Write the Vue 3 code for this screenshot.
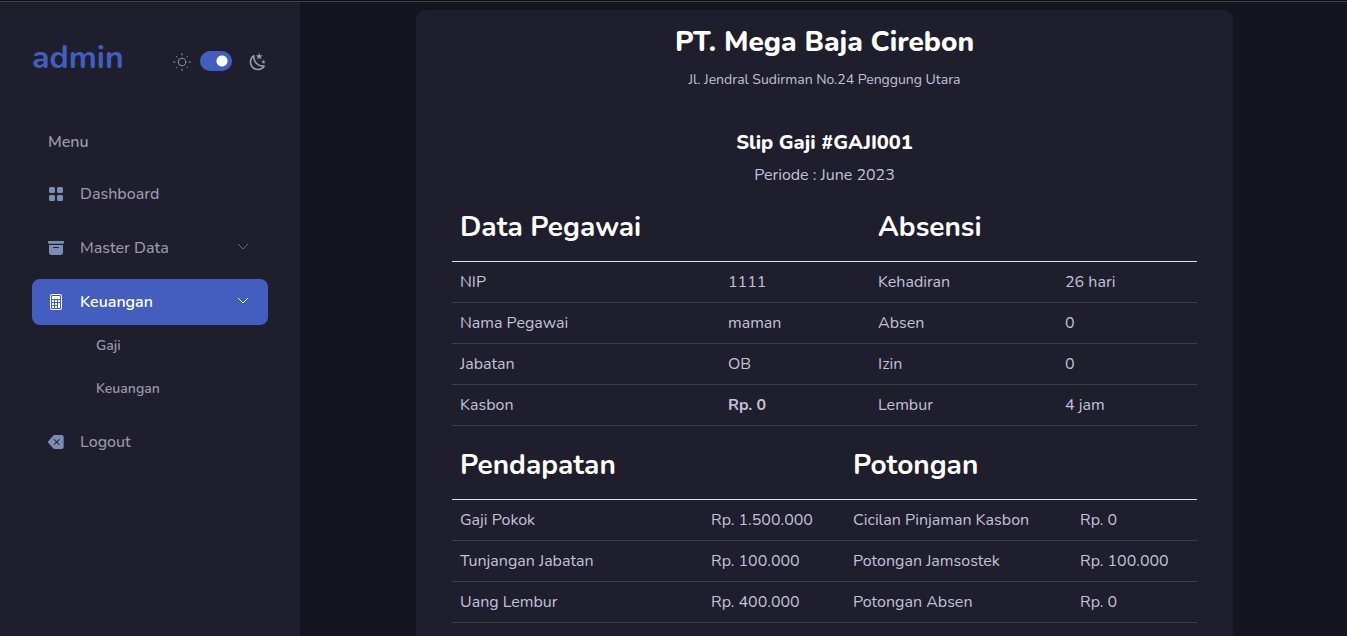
<script setup>
import { ref } from 'vue'

const dark = ref(true)

const employee = [
  ['NIP', '1111', 'Kehadiran', '26 hari'],
  ['Nama Pegawai', 'maman', 'Absen', '0'],
  ['Jabatan', 'OB', 'Izin', '0'],
  ['Kasbon', 'Rp. 0', 'Lembur', '4 jam'],
]

const salary = [
  ['Gaji Pokok', 'Rp. 1.500.000', 'Cicilan Pinjaman Kasbon', 'Rp. 0'],
  ['Tunjangan Jabatan', 'Rp. 100.000', 'Potongan Jamsostek', 'Rp. 100.000'],
  ['Uang Lembur', 'Rp. 400.000', 'Potongan Absen', 'Rp. 0'],
]
</script>

<template>
  <div class="layout">
    <aside class="sidebar">
      <header class="brand-row">
        <a class="brand" href="#">admin</a>
        <div class="theme">
          <svg class="sun" viewBox="0 0 21 21" width="20" height="20" aria-hidden="true">
            <g fill="none" stroke="currentColor" stroke-linecap="round" stroke-linejoin="round">
              <circle cx="10.5" cy="10.5" r="4" />
              <path d="M10.5 1.5v1.6M10.5 17.9v1.6M1.5 10.5h1.6M17.9 10.5h1.6M4.6 4.6l.6.6M15.8 15.8l.6.6M4.6 16.4l.6-.6M15.8 5.2l.6-.6" />
            </g>
          </svg>
          <input v-model="dark" class="switch" type="checkbox" role="switch" aria-label="Dark mode" />
          <svg class="moon" viewBox="0 0 24 24" width="20" height="20" aria-hidden="true">
            <path fill="currentColor" d="m17.75 4.09l-2.53 1.94l.91 3.06l-2.63-1.81l-2.63 1.81l.91-3.06l-2.53-1.94L12.44 4l1.06-3l1.06 3l3.19.09m3.5 6.91l-1.64 1.25l.59 1.98l-1.7-1.17l-1.7 1.17l.59-1.98L15.75 11l2.06-.05L18.5 9l.69 1.95l2.06.05m-2.28 4.95c.83-.08 1.72 1.1 1.19 1.85c-.32.45-.66.87-1.08 1.27C15.17 23 8.84 23 4.94 19.07c-3.91-3.9-3.91-10.24 0-14.14c.4-.4.82-.76 1.27-1.08c.75-.53 1.93.36 1.85 1.19c-.27 2.86.69 5.83 2.89 8.02a9.96 9.96 0 0 0 8.02 2.89m-1.64 2.02a12.08 12.08 0 0 1-7.8-3.47c-2.17-2.19-3.33-5-3.49-7.82c-2.81 3.14-2.7 7.96.31 10.98c3.02 3.01 7.84 3.12 10.98.31Z" />
          </svg>
        </div>
      </header>

      <nav class="nav">
        <h2 class="nav-title">Menu</h2>
        <ul class="menu">
          <li>
            <a class="link" href="#">
              <svg class="icon" viewBox="0 0 16 16" width="16" height="16" aria-hidden="true">
                <path fill="currentColor" d="M1 2.500A1.500 1.500 0 0 1 2.500 1h3A1.500 1.500 0 0 1 7 2.500v3A1.500 1.500 0 0 1 5.500 7h-3A1.500 1.500 0 0 1 1 5.500zm8 0A1.500 1.500 0 0 1 10.500 1h3A1.500 1.500 0 0 1 15 2.500v3A1.500 1.500 0 0 1 13.500 7h-3A1.500 1.500 0 0 1 9 5.500zm-8 8A1.500 1.500 0 0 1 2.500 9h3A1.500 1.500 0 0 1 7 10.500v3A1.500 1.500 0 0 1 5.500 15h-3A1.500 1.500 0 0 1 1 13.500zm8 0A1.500 1.500 0 0 1 10.500 9h3a1.500 1.500 0 0 1 1.500 1.500v3a1.500 1.500 0 0 1-1.500 1.500h-3A1.500 1.500 0 0 1 9 13.500z" />
              </svg>
              <span>Dashboard</span>
            </a>
          </li>
          <li>
            <a class="link" href="#">
              <svg class="icon" viewBox="0 0 16 16" width="16" height="16" aria-hidden="true">
                <path fill="currentColor" d="M12.643 15C13.979 15 15 13.845 15 12.500V5H1v7.500C1 13.845 2.021 15 3.357 15zM5.500 7h5a.5.5 0 0 1 0 1h-5a.5.5 0 0 1 0-1M.8 1a.8.8 0 0 0-.8.8V3a.8.8 0 0 0 .8.8h14.400A.8.8 0 0 0 16 3V1.800a.8.8 0 0 0-.8-.8z" />
              </svg>
              <span>Master Data</span>
              <svg class="chevron" viewBox="0 0 12 12" width="12" height="12" aria-hidden="true">
                <path fill="none" stroke="currentColor" d="M1 3l5 5 5-5" />
              </svg>
            </a>
          </li>
          <li>
            <a class="link active" href="#" aria-current="page">
              <svg class="icon" viewBox="0 0 16 16" width="16" height="16" aria-hidden="true">
                <path fill="currentColor" d="M12 1a1 1 0 0 1 1 1v12a1 1 0 0 1-1 1H4a1 1 0 0 1-1-1V2a1 1 0 0 1 1-1zM4 0a2 2 0 0 0-2 2v12a2 2 0 0 0 2 2h8a2 2 0 0 0 2-2V2a2 2 0 0 0-2-2z" />
                <path fill="currentColor" d="M4 2.500a.5.5 0 0 1 .5-.5h7a.5.5 0 0 1 .5.5v2a.5.5 0 0 1-.5.5h-7a.5.5 0 0 1-.5-.5zm0 4a.5.5 0 0 1 .5-.5h1a.5.5 0 0 1 .5.5v1a.5.5 0 0 1-.5.5h-1a.5.5 0 0 1-.5-.5zm0 3a.5.5 0 0 1 .5-.5h1a.5.5 0 0 1 .5.5v1a.5.5 0 0 1-.5.5h-1a.5.5 0 0 1-.5-.5zm0 3a.5.5 0 0 1 .5-.5h1a.5.5 0 0 1 .5.5v1a.5.5 0 0 1-.5.5h-1a.5.5 0 0 1-.5-.5zm3-6a.5.5 0 0 1 .5-.5h1a.5.5 0 0 1 .5.5v1a.5.5 0 0 1-.5.5h-1a.5.5 0 0 1-.5-.5zm0 3a.5.5 0 0 1 .5-.5h1a.5.5 0 0 1 .5.5v1a.5.5 0 0 1-.5.5h-1a.5.5 0 0 1-.5-.5zm0 3a.5.5 0 0 1 .5-.5h1a.5.5 0 0 1 .5.5v1a.5.5 0 0 1-.5.5h-1a.5.5 0 0 1-.5-.5zm3-6a.5.5 0 0 1 .5-.5h1a.5.5 0 0 1 .5.5v1a.5.5 0 0 1-.5.5h-1a.5.5 0 0 1-.5-.5zm0 3a.5.5 0 0 1 .5-.5h1a.5.5 0 0 1 .5.5v4a.5.5 0 0 1-.5.5h-1a.5.5 0 0 1-.5-.5z" />
              </svg>
              <span>Keuangan</span>
              <svg class="chevron" viewBox="0 0 12 12" width="12" height="12" aria-hidden="true">
                <path fill="none" stroke="currentColor" d="M1 3l5 5 5-5" />
              </svg>
            </a>
            <ul class="submenu">
              <li><a href="#">Gaji</a></li>
              <li><a href="#">Keuangan</a></li>
            </ul>
          </li>
          <li>
            <a class="link" href="#">
              <svg class="icon" viewBox="0 0 16 16" width="16" height="16" aria-hidden="true">
                <path fill="currentColor" d="M15.683 3a2 2 0 0 0-2-2h-7.080a2 2 0 0 0-1.519.698L.241 7.350a1 1 0 0 0 0 1.302l4.843 5.650A2 2 0 0 0 6.603 15h7.080a2 2 0 0 0 2-2zM5.829 5.854a.5.5 0 1 1 .707-.708l2.147 2.147 2.146-2.147a.5.5 0 1 1 .707.708L9.390 8l2.146 2.146a.5.5 0 0 1-.707.708L8.683 8.707l-2.147 2.147a.5.5 0 0 1-.707-.708L7.976 8z" />
              </svg>
              <span>Logout</span>
            </a>
          </li>
        </ul>
      </nav>
    </aside>

    <main class="main">
      <article class="card">
        <header class="slip-head">
          <h1>PT. Mega Baja Cirebon</h1>
          <p class="address">Jl. Jendral Sudirman No.24 Penggung Utara</p>
          <h2>Slip Gaji #GAJI001</h2>
          <p class="period">Periode : June 2023</p>
        </header>

        <table>
          <colgroup>
            <col class="e1" /><col class="e2" /><col class="e3" /><col class="e4" />
          </colgroup>
          <thead>
            <tr>
              <th colspan="2" scope="colgroup">Data Pegawai</th>
              <th colspan="2" scope="colgroup">Absensi</th>
            </tr>
          </thead>
          <tbody>
            <tr v-for="row in employee" :key="row[0]">
              <td>{{ row[0] }}</td>
              <td :class="{ strong: row[0] === 'Kasbon' }">{{ row[1] }}</td>
              <td>{{ row[2] }}</td>
              <td>{{ row[3] }}</td>
            </tr>
          </tbody>
        </table>

        <table>
          <colgroup>
            <col class="s1" /><col class="s2" /><col class="s3" /><col class="s4" />
          </colgroup>
          <thead>
            <tr>
              <th colspan="2" scope="colgroup">Pendapatan</th>
              <th colspan="2" scope="colgroup">Potongan</th>
            </tr>
          </thead>
          <tbody>
            <tr v-for="row in salary" :key="row[0]">
              <td v-for="cell in row" :key="cell">{{ cell }}</td>
            </tr>
          </tbody>
        </table>
      </article>
    </main>
  </div>
</template>

<style>
body {
  background: #151521;
}
</style>

<style scoped>
.layout {
  display: flex;
  box-sizing: border-box;
  min-height: 100vh;
  border-top: 1px solid #0b0b10;
  background: #151521;
  color: #c2c2d9;
  font-family: Nunito, Lato, "Open Sans", sans-serif;
  font-size: 16px;
  line-height: 24px;
}
h1, h2, p, ul {
  margin: 0;
  padding: 0;
}
ul {
  list-style: none;
}
a {
  color: inherit;
  text-decoration: none;
}
svg {
  flex: none;
}

.sidebar {
  flex: none;
  box-sizing: border-box;
  width: 300px;
  padding: 32px;
  border-top: 1px solid #434343;
  background: #1e1e2d;
}
.brand-row {
  display: flex;
  align-items: center;
  justify-content: space-between;
  height: 50px;
}
.brand {
  color: #435ebe;
  font-size: 32px;
  font-weight: 700;
  line-height: 40px;
  padding-bottom: 2px;
}
.theme {
  display: flex;
  align-items: center;
  gap: 8px;
  padding-top: 6px;
  color: #9899ac;
}
.switch {
  appearance: none;
  width: 32px;
  height: 20px;
  margin: 0 8px 2px 0;
  border-radius: 10px;
  background: radial-gradient(circle at 10px 10px, #fff 5px, transparent 6px) #6c757d;
}
.switch:checked {
  background: radial-gradient(circle at 22px 10px, #fff 5px, transparent 6px) #435ebe;
}

.nav {
  margin-top: 46px;
  color: #9899ac;
}
.nav-title {
  padding: 0 16px;
  font-size: 16px;
  font-weight: 600;
}
.menu {
  display: flex;
  flex-direction: column;
  gap: 8px;
  margin-top: 17px;
}
.link {
  display: flex;
  align-items: center;
  gap: 16px;
  padding: 11px 16px;
  border-radius: 8px;
  font-weight: 500;
}
.icon {
  color: #7c8db5;
}
.chevron {
  margin: 0 3px 2px auto;
  color: #6c6c7c;
}
.active {
  background: #435ebe;
  color: #fff;
  font-weight: 600;
}
.active .icon,
.active .chevron {
  color: #fff;
}
.submenu a {
  display: block;
  padding: 10px 16px 12px 64px;
  font-size: 14px;
  font-weight: 600;
  line-height: 21px;
}

.main {
  flex: 1;
  min-width: 0;
  padding: 8px 114px 0 116px;
  border-top: 1px solid #434343;
}
.card {
  padding: 12px 36px 24px;
  border-radius: 10px;
  background: #1e1e2d;
}
.slip-head {
  padding-bottom: 17px;
  text-align: center;
}
h1, .slip-head h2, th {
  color: #fff;
}
h1 {
  font-size: 28px;
  font-weight: 800;
  line-height: 40px;
}
.address {
  margin-top: 6px;
  font-size: 14px;
}
.slip-head h2 {
  margin-top: 39px;
  font-size: 20px;
  font-weight: 800;
}
.period {
  margin-top: 8px;
}

table {
  width: 100%;
  margin-bottom: 16px;
  border-collapse: collapse;
  table-layout: fixed;
}
th {
  padding: 6px 8px 17px;
  border-bottom: 1px solid #dfdfdf;
  font-size: 28px;
  font-weight: 700;
  line-height: 34px;
  text-align: left;
}
td {
  padding: 8px;
  border-bottom: 1px solid #404040;
}
.strong {
  font-weight: 700;
}
.e1 { width: 268px; }
.e2 { width: 150px; }
.e3 { width: 187px; }
.e4 { width: 140px; }
.s1 { width: 251px; }
.s2 { width: 142px; }
.s3 { width: 227px; }
.s4 { width: 125px; }
</style>
